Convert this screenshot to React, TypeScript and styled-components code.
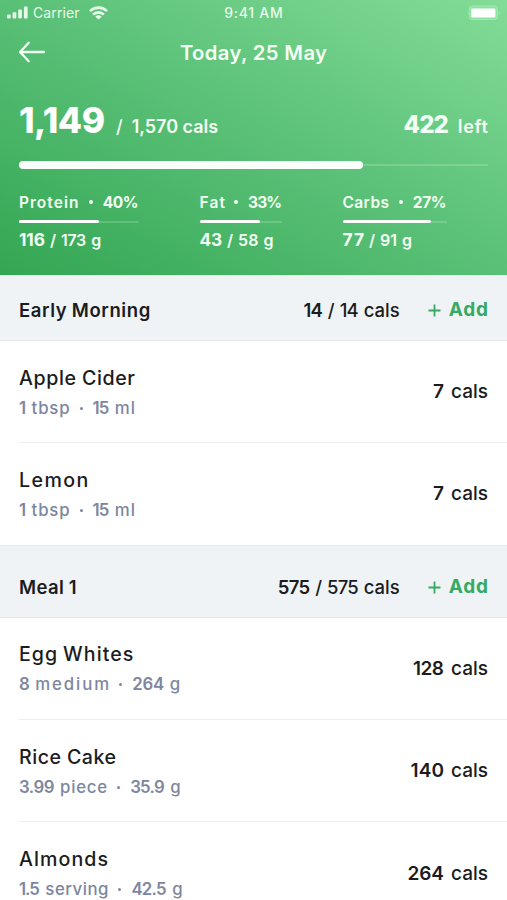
import React from "react";
import styled, { createGlobalStyle } from "styled-components";

const GlobalStyle = createGlobalStyle`
  * { box-sizing: border-box; }
  body {
    margin: 0;
    background: #fff;
    color: #1b1c1e;
    font-family: Inter, "Open Sans", sans-serif;
    -webkit-font-smoothing: antialiased;
  }
`;

const Screen = styled.main`
  width: 507px;
  height: 900px;
  overflow: hidden;
  background: #fff;
`;

const Word = styled.span<{ $track?: number; $weight?: number; $size?: number }>`
  display: block;
  flex: none;
  white-space: nowrap;
  letter-spacing: ${(p) => p.$track ?? 0}px;
  margin-right: ${(p) => -(p.$track ?? 0)}px;
  ${(p) => p.$weight && `font-weight: ${p.$weight};`}
  ${(p) => p.$size && `font-size: ${p.$size}px;`}
`;

const Header = styled.header`
  height: 275px;
  color: #f3fff3;
  background: linear-gradient(to top right, #33a653 0%, #5bc178 52%, #83dc97 100%);
`;

const StatusBar = styled.div`
  display: grid;
  grid-template-columns: 1fr auto 1fr;
  align-items: center;
  height: 25px;
  padding: 0 7px;
  font-size: 14px;
  color: #e8fbea;
`;

const Carrier = styled.div`
  display: flex;
  align-items: center;
`;

const CarrierName = styled(Word)`
  margin-left: 5px;
`;

const WifiIcon = styled.svg`
  margin-left: 9px;
`;

const BatteryIcon = styled.svg`
  justify-self: end;
  margin-right: -1px;
`;

const NavBar = styled.div`
  display: grid;
  grid-template-columns: 60px 1fr 60px;
  align-items: center;
  height: 54px;
`;

const BackButton = styled.button`
  display: flex;
  padding: 0 0 0 18px;
  border: 0;
  background: none;
  color: inherit;
`;

const Title = styled.h1`
  display: flex;
  justify-content: center;
  margin: 0;
  padding-top: 1px;
  font-size: 20.3px;
  font-weight: 600;
`;

const Summary = styled.div`
  display: flex;
  align-items: baseline;
  height: 81.5px;
  padding: 21px 19px 0;
  font-size: 18px;
  font-weight: 600;
  line-height: 42px;
`;

const Consumed = styled(Word)`
  font-size: 35.3px;
  font-weight: 800;
  color: #fff;
`;

const Slash = styled.span`
  margin: 0 9px 0 11px;
  font-weight: 500;
`;

const Remaining = styled.div`
  display: flex;
  align-items: baseline;
  gap: 9px;
  margin-left: auto;
`;

const Track = styled.div<{ $height: number; $line: number }>`
  display: flex;
  align-items: center;
  height: ${(p) => p.$height}px;
  background: linear-gradient(rgba(255, 255, 255, 0.17), rgba(255, 255, 255, 0.17)) center / 100%
    ${(p) => p.$line}px no-repeat;
`;

const Fill = styled.div`
  height: 100%;
  border-radius: 4px;
  background: #fbfffb;
`;

const CaloriesProgress = styled.div`
  margin: 0 19px;
`;

const Macros = styled.div`
  display: grid;
  grid-template-columns: 180.5px 143px auto;
  padding: 23.5px 0 0 19px;
`;

const Macro = styled.section<{ $width: number }>`
  width: ${(p) => p.$width}px;
`;

const MacroLabel = styled.div`
  display: flex;
  align-items: center;
  justify-content: space-between;
  height: 20px;
  margin-bottom: 8px;
  font-size: 15.5px;
  font-weight: 600;
`;

const MacroValue = styled.div`
  display: flex;
  align-items: baseline;
  gap: 5px;
  margin-top: 5px;
  font-size: 16px;
  font-weight: 600;
  line-height: 24px;
`;

const Dot = styled.i<{ $size: number }>`
  flex: none;
  width: ${(p) => p.$size}px;
  height: ${(p) => p.$size}px;
  border-radius: 50%;
  background: currentColor;
`;

const SectionHeader = styled.header<{ $tall?: boolean }>`
  display: flex;
  align-items: center;
  height: ${(p) => (p.$tall ? 73 : 66)}px;
  padding: ${(p) => (p.$tall ? 12 : 4)}px 19px 0;
  border-top: 1px solid ${(p) => (p.$tall ? "#e7eaec" : "#dff1e7")};
  border-bottom: 1px solid #e5e8ea;
  background: #eff3f6;
  font-size: 18.5px;
`;

const SectionTitle = styled.h2`
  display: flex;
  gap: 5px;
  margin: 0;
  font-size: 18.5px;
  font-weight: 600;
`;

const Totals = styled.div`
  display: flex;
  gap: 5px;
  margin-left: auto;
  font-weight: 500;
`;

const AddButton = styled.button`
  display: flex;
  align-items: center;
  gap: 8px;
  margin-left: 28px;
  padding: 0;
  border: 0;
  background: none;
  color: #35aa62;
  font: 700 19px/24px Inter, sans-serif;
`;

const FoodList = styled.ul`
  margin: 0;
  padding: 0 0 0 19px;
  list-style: none;
`;

const FoodRow = styled.li`
  display: flex;
  align-items: center;
  justify-content: space-between;
  height: 101px;
  padding-right: 19px;
  & + & {
    height: 102.7px;
    border-top: 1.5px solid #edeef0;
  }
`;

const FoodInfo = styled.div`
  padding-top: 2px;
`;

const FoodName = styled.div`
  display: flex;
  gap: 6px;
  height: 30px;
  align-items: center;
  font-size: 19.6px;
  font-weight: 500;
`;

const Portion = styled.div`
  display: flex;
  align-items: center;
  gap: 5.5px;
  height: 30px;
  font-size: 16.8px;
  font-weight: 500;
  color: #7d86a0;
  ${Dot} { margin: 1px 4.5px 0; }
`;

const Calories = styled.div`
  display: flex;
  gap: 7px;
  font-size: 19px;
  font-weight: 500;
`;

type Tracked = [text: string, track: number];
type Food = { name: Tracked[]; portion: [Tracked, Tracked, Tracked, Tracked]; cals: Tracked };
type Meal = { title: Tracked[]; eaten: Tracked; goal: Tracked; foods: Food[] };

const macros = [
  { name: ["Protein", 1.03], pct: ["40%", -0.4], width: 119.5, fill: 80, eaten: ["116", -0.1], goal: ["173", -0.3] },
  { name: ["Fat", 1.1], pct: ["33%", -0.9], width: 82.5, fill: 60.5, eaten: ["43", -0.3], goal: ["58", 0] },
  { name: ["Carbs", 0.4], pct: ["27%", -0.4], width: 104, fill: 88, eaten: ["77", 1], goal: ["91", 0] },
] as { name: Tracked; pct: Tracked; width: number; fill: number; eaten: Tracked; goal: Tracked }[];

const meals: Meal[] = [
  {
    title: [["Early", 0.6], ["Morning", 0.6]],
    eaten: ["14", -0.8],
    goal: ["14", -0.8],
    foods: [
      { name: [["Apple", 0.6], ["Cider", 0.6]], portion: [["1", 0], ["tbsp", 0.8], ["15", -0.9], ["ml", 1]], cals: ["7", 0] },
      { name: [["Lemon", 1.4]], portion: [["1", 0], ["tbsp", 0.8], ["15", -0.9], ["ml", 1]], cals: ["7", 0] },
    ],
  },
  {
    title: [["Meal", 0.4], ["1", 0]],
    eaten: ["575", -0.7],
    goal: ["575", -0.8],
    foods: [
      { name: [["Egg", 1], ["Whites", 1.05]], portion: [["8", 0], ["medium", 1.9], ["264", -0.1], ["g", 0]], cals: ["128", -0.44] },
      { name: [["Rice", 0.5], ["Cake", 0.5]], portion: [["3.99", -0.5], ["piece", 0.8], ["35.9", -0.75], ["g", 0]], cals: ["140", 0.1] },
      { name: [["Almonds", 1.1]], portion: [["1.5", -1], ["serving", 0.5], ["42.5", -0.7], ["g", 0]], cals: ["264", 0] },
    ],
  },
];

export default function App() {
  return (
    <>
      <GlobalStyle />
      <Screen>
        <Header>
          <StatusBar>
            <Carrier>
              <svg width="21" height="13" viewBox="0 0 21 13" fill="currentColor">
                <rect x="0" y="8.5" width="3.7" height="4" rx="1" />
                <rect x="5.6" y="6.2" width="3.7" height="6.3" rx="1" />
                <rect x="11.2" y="3.6" width="3.7" height="8.9" rx="1" />
                <rect x="16.9" y="0.6" width="3.7" height="11.9" rx="1" />
              </svg>
              <CarrierName $track={0.1}>Carrier</CarrierName>
              <WifiIcon width="19" height="14" viewBox="0 0 19 14" fill="none" stroke="currentColor" strokeWidth="2.6">
                <path d="M1 5.1a12.2 12.2 0 0 1 17 0" />
                <path d="M4.1 8.6a7.7 7.7 0 0 1 10.8 0" />
                <path d="M9.5 13.6 6.3 10.7a4.2 4.2 0 0 1 6.4 0Z" fill="currentColor" stroke="none" />
              </WifiIcon>
            </Carrier>
            <Word $weight={500} $track={0.75}>9:41 AM</Word>
            <BatteryIcon width="33" height="16" viewBox="0 0 33 16">
              <rect x="1.3" y="1" width="28" height="13.5" rx="3" fill="#8fe1a3" stroke="#a0e7b0" strokeWidth="1.2" />
              <rect x="3.2" y="3.6" width="24.2" height="9" rx="1" fill="#fff" />
              <path d="M31 6v4c1.5-.8 1.5-3.2 0-4Z" fill="#a0e7b0" />
            </BatteryIcon>
          </StatusBar>

          <NavBar>
            <BackButton aria-label="Back">
              <svg width="28" height="22" viewBox="0 0 28 22" fill="none" stroke="currentColor" strokeWidth="2.3" strokeLinecap="round" strokeLinejoin="round">
                <path d="M26 11H2M10.7 1.8 2 11l8.7 9.2" />
              </svg>
            </BackButton>
            <Title><Word $track={0.35}>Today, 25 May</Word></Title>
          </NavBar>

          <Summary>
            <Consumed $track={-0.5}>1,149</Consumed>
            <Slash>/</Slash>
            <Word $track={-0.03}>1,570 cals</Word>
            <Remaining>
              <Word $weight={800} $size={24} $track={-0.9}>422</Word>
              <Word $track={0.7}>left</Word>
            </Remaining>
          </Summary>

          <CaloriesProgress>
            <Track $height={8} $line={2}>
              <Fill style={{ width: 344 }} />
            </Track>
          </CaloriesProgress>

          <Macros>
            {macros.map((m) => (
              <Macro key={m.name[0]} $width={m.width}>
                <MacroLabel>
                  <Word $track={m.name[1]}>{m.name[0]}</Word>
                  <Dot $size={4} />
                  <Word $weight={700} $track={m.pct[1]}>{m.pct[0]}</Word>
                </MacroLabel>
                <Track $height={3} $line={2}>
                  <Fill style={{ width: m.fill }} />
                </Track>
                <MacroValue>
                  <Word $weight={700} $size={17.3} $track={m.eaten[1]}>{m.eaten[0]}</Word>
                  <Word>/</Word>
                  <Word $track={m.goal[1]}>{m.goal[0]}</Word>
                  <Word>g</Word>
                </MacroValue>
              </Macro>
            ))}
          </Macros>
        </Header>

        {meals.map((meal, i) => (
          <section key={i}>
            <SectionHeader $tall={i > 0}>
              <SectionTitle>
                {meal.title.map(([text, track]) => <Word key={text} $track={track}>{text}</Word>)}
              </SectionTitle>
              <Totals>
                <Word $weight={600} $track={meal.eaten[1]}>{meal.eaten[0]}</Word>
                <Word>/</Word>
                <Word $track={meal.goal[1]}>{meal.goal[0]}</Word>
                <Word>cals</Word>
              </Totals>
              <AddButton>
                <svg width="13" height="13" viewBox="0 0 13 13" stroke="currentColor" strokeWidth="1.8">
                  <path d="M6.5 .5v12M.5 6.5h12" />
                </svg>
                <Word $track={0.8}>Add</Word>
              </AddButton>
            </SectionHeader>
            <FoodList>
              {meal.foods.map((food) => {
                const [amount, unit, weight, weightUnit] = food.portion;
                return (
                  <FoodRow key={food.name[0][0]}>
                    <FoodInfo>
                      <FoodName>
                        {food.name.map(([text, track]) => <Word key={text} $track={track}>{text}</Word>)}
                      </FoodName>
                      <Portion>
                        <Word $weight={600} $track={amount[1]}>{amount[0]}</Word>
                        <Word $track={unit[1]}>{unit[0]}</Word>
                        <Dot $size={3} />
                        <Word $weight={600} $track={weight[1]}>{weight[0]}</Word>
                        <Word $track={weightUnit[1]}>{weightUnit[0]}</Word>
                      </Portion>
                    </FoodInfo>
                    <Calories>
                      <Word $weight={600} $track={food.cals[1]}>{food.cals[0]}</Word>
                      <Word>cals</Word>
                    </Calories>
                  </FoodRow>
                );
              })}
            </FoodList>
          </section>
        ))}
      </Screen>
    </>
  );
}
